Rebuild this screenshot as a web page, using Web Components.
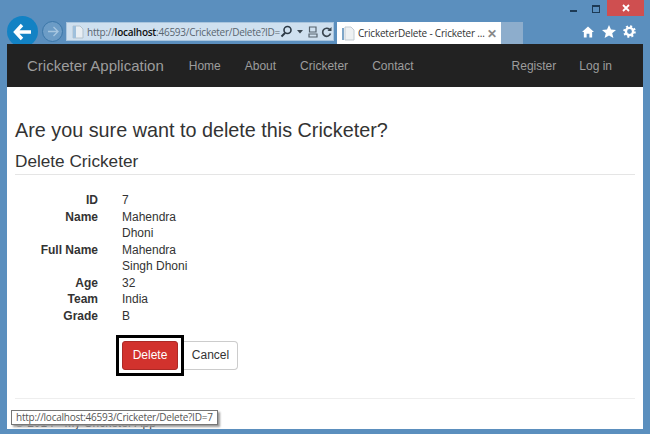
<!DOCTYPE html>
<html><head><meta charset="utf-8"><style>
html,body{margin:0;padding:0;width:650px;height:434px;overflow:hidden;background:#5b8fbe}
body{font-family:"Liberation Sans",Arial,sans-serif}
</style></head><body>
<ie-window>
  <ie-chrome slot="chrome"></ie-chrome>
  <app-navbar brand="Cricketer Application"></app-navbar>
  <app-page></app-page>
</ie-window>
<script>
function def(name,html){customElements.define(name,class extends HTMLElement{connectedCallback(){if(this.shadowRoot)return;this.attachShadow({mode:'open'}).innerHTML=html;}});}
def('ie-window',`<style>:host{display:flex;flex-direction:column;position:relative;width:650px;height:434px;background:#5b8fbe;overflow:hidden;box-sizing:border-box}
.view{margin:0 7px 5px 7px;flex:1;display:flex;flex-direction:column;background:#fff;min-height:0;overflow:hidden;position:relative}
</style><slot name="chrome"></slot><div class="view"><slot></slot></div>`);
def('ie-chrome',`<style>:host{display:block;height:44px;position:relative;flex:none;font-family:"Open Sans","Liberation Sans",sans-serif}
.row{display:flex;align-items:flex-start;height:44px}
.back{width:31px;height:31px;border-radius:50%;background:#1282c4;margin:16px 0 0 7px;display:flex;align-items:center;justify-content:center;flex:none}
.fwd{width:21px;height:21px;border-radius:50%;border:1px solid #3b76a8;background:#6c9cc6;box-sizing:border-box;margin:21px 0 0 4px;flex:none;display:flex;align-items:center;justify-content:center}
.addr{margin:22px 0 0 3px;width:268px;height:19px;background:#cfe0ef;border:1px solid #a9c5de;box-sizing:border-box;display:flex;align-items:center;font:10px/16px "Open Sans","Liberation Sans",sans-serif;color:#5a6670;flex:none;white-space:nowrap;overflow:hidden}
.addr b{color:#111;font-weight:600}.addr .u{margin-left:3px;width:192px;letter-spacing:-.25px;flex:none}
.addr svg{flex:none}
.tab{margin:22px 0 0 3px;width:164px;height:22px;background:#fff;display:flex;align-items:center;box-sizing:border-box;padding:0 4px 0 5px;font:10px "Open Sans","Liberation Sans",sans-serif;color:#333;white-space:nowrap;flex:none}
.tab span{flex:1;margin-left:3px;letter-spacing:-.2px}.tab i{font-style:normal;color:#888;font-size:12px;font-weight:700}
.new{margin:22px 0 0 0;width:22px;height:22px;background:#8dadcc;flex:none}
.tools{position:absolute;right:14px;top:25px;display:flex;gap:7.500px;align-items:center}
.caps{position:absolute;top:0;right:6px;display:flex;align-items:flex-start}
.min{width:7px;height:2px;background:#1d3a55;margin:10px 15px 0 0}
.max{width:6px;height:5px;border:1px solid #1d3a55;border-top-width:2px;margin:5px 7px 0 0}
.close{width:37px;height:16px;background:#cf4f50;color:#fff;display:flex;align-items:center;justify-content:center}
</style><div class="row">
<div class="back"><svg width="20" height="18" viewBox="0 0 20 18"><path d="M9 2 2.500 9 9 16M3 9H18" fill="none" stroke="#fff" stroke-width="3.400"/></svg></div>
<div class="fwd"><svg width="12" height="11" viewBox="0 0 12 11"><path d="M6.500 1 11 5.500 6.500 10M11 5.500H1" fill="none" stroke="#a7c6e0" stroke-width="1.300"/></svg></div>
<div class="addr"><svg style="margin-left:5px" width="12" height="14" viewBox="0 0 12 14"><path d="M1 1H8L11 4V13H1Z" fill="#e8eef3" stroke="#b4c2cd"/><path d="M1 1H4V13H1Z" fill="#9fc0dc"/></svg>
<span class="u">http://<b>localhost</b>:46593/Cricketer/Delete?ID=</span>
<svg width="13" height="13" viewBox="0 0 13 13" style="margin-left:1px"><circle cx="7.500" cy="5" r="3.500" fill="none" stroke="#2d3a46" stroke-width="1.600"/><path d="M5 8 1.500 11.500" stroke="#2d3a46" stroke-width="2"/></svg>
<svg width="6" height="4" viewBox="0 0 6 4" style="margin-left:4px"><path d="M0 0H6L3 3.500Z" fill="#3a4650"/></svg>
<svg width="10" height="12" viewBox="0 0 10 12" style="margin-left:5px"><path d="M1.500 1H8V6H1.500ZM1 8H9V11H1Z" fill="none" stroke="#56636e" stroke-width="1.200"/></svg>
<svg width="11" height="12" viewBox="0 0 11 12" style="margin-left:3px"><path d="M9 4A4 4 0 1 0 9.500 7.500" fill="none" stroke="#3a4650" stroke-width="1.700"/><path d="M10.500 1V5H6.500Z" fill="#3a4650"/></svg></div>
<div class="tab"><svg width="13" height="15" viewBox="0 0 13 15"><path d="M3 1H9L12 4V14H3Z" fill="#eef1f3" stroke="#c3ccd3"/><path d="M0 2H2V14H0Z" fill="#7fa6c8"/></svg><span>CricketerDelete - Cricketer ...</span><i>✕</i></div>
<div class="new"></div></div>
<div class="caps"><div class="min"></div><div class="max"></div><div class="close"><svg width="8" height="8" viewBox="0 0 8 8"><path d="M1 1 7 7M7 1 1 7" stroke="#fff" stroke-width="1.800"/></svg></div></div>
<div class="tools">
<svg width="12" height="12" viewBox="0 0 13 12"><path d="M6.500 0 13 6H11V12H8V8H5V12H2V6H0Z" fill="#fff"/></svg>
<svg width="14" height="13" viewBox="0 0 14 13"><path d="M7 0 9 4.600 14 5 10.200 8.200 11.400 13 7 10.400 2.600 13 3.800 8.200 0 5 5 4.600Z" fill="#fff"/></svg>
<svg width="13" height="13" viewBox="0 0 13 13"><circle cx="6.500" cy="6.500" r="3.600" fill="none" stroke="#fff" stroke-width="2.400"/><circle cx="6.500" cy="6.500" r="5.200" fill="none" stroke="#fff" stroke-width="2.200" stroke-dasharray="2 2.080"/></svg>
</div>`);
def('app-navbar',`<style>:host{display:flex;flex:none;height:43px;background:#222;align-items:center;padding:0 0 0 20px;color:#9d9d9d;font:12px "Liberation Sans",Arial,sans-serif}
.b{font-size:15px;margin-right:25px}nav{display:flex;gap:24px}.sp{flex:1}.r{margin-right:31px;gap:23px}
</style><span class="b">Cricketer Application</span><nav><span>Home</span><span>About</span><span>Cricketer</span><span>Contact</span></nav><span class="sp"></span><nav class="r"><span>Register</span><span>Log in</span></nav>`);
def('app-page',`<style>:host{display:block;padding:0 8px;color:#333;font:12px/16.500px "Liberation Sans",Arial,sans-serif;position:relative;flex:1}
h2{font-weight:400;font-size:19.800px;line-height:22px;margin:32px 0 0;color:#333}
h4{font-weight:400;font-size:17.200px;line-height:20px;margin:10px 0 0;padding-bottom:3px;border-bottom:1px solid #e5e5e5}
dl{display:grid;grid-template-columns:83px 1fr;column-gap:24px;margin:17px 0 0}
dt{font-weight:700;text-align:right}dd{margin:0}
.act{display:flex;margin:11px 0 0 101px;align-items:center}
.hl{border:3px solid #000;padding:3px;display:flex;background:#fff;position:relative;z-index:1}
.del{width:56px;height:29px;background:#d2322d;border:1px solid #ac2925;border-radius:3px;color:#fff;display:flex;align-items:center;justify-content:center;box-sizing:border-box}
.can{width:54px;height:29px;border:1px solid #ccc;border-left:0;border-radius:0 4px 4px 0;display:flex;align-items:center;justify-content:center;box-sizing:border-box;padding-left:0}
hr{border:0;border-top:1px solid #eee;margin:22px 0 0}
footer{margin-top:16px;line-height:16px}
.tip{position:absolute;left:4px;bottom:6px;background:#fff;border:1px solid #767676;box-shadow:2px 2px 2px #999;font:10px/13px "Open Sans","Liberation Sans",sans-serif;color:#555;padding:0 4px;white-space:nowrap;letter-spacing:-.25px}
</style><h2>Are you sure want to delete this Cricketer?</h2><h4>Delete Cricketer</h4>
<dl><dt>ID</dt><dd>7</dd><dt>Name</dt><dd>Mahendra<br>Dhoni</dd><dt>Full Name</dt><dd>Mahendra<br>Singh Dhoni</dd><dt>Age</dt><dd>32</dd><dt>Team</dt><dd>India</dd><dt>Grade</dt><dd>B</dd></dl>
<div class="act"><div class="hl"><div class="del">Delete</div></div><div class="can">Cancel</div></div>
<hr><footer>© 2014 - My Cricketer App</footer><div class="tip">http://localhost:46593/Cricketer/Delete?ID=7</div>`);
</script></body></html>
